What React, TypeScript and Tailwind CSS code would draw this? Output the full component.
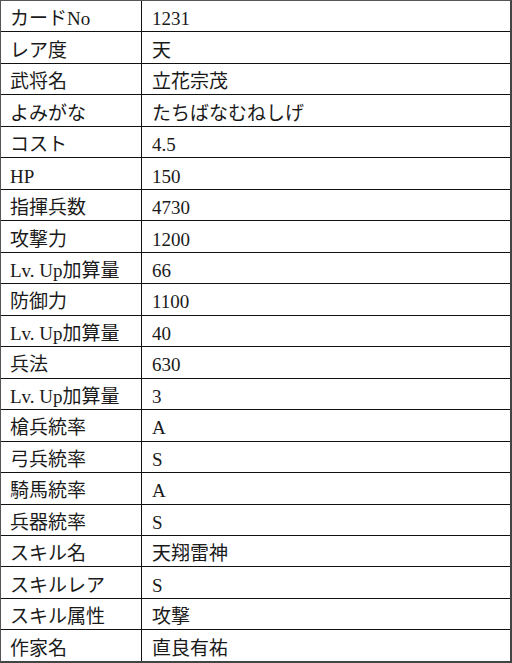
import React from "react";

const rows: [string, string][] = [
  ["カードNo", "1231"],
  ["レア度", "天"],
  ["武将名", "立花宗茂"],
  ["よみがな", "たちばなむねしげ"],
  ["コスト", "4.5"],
  ["HP", "150"],
  ["指揮兵数", "4730"],
  ["攻撃力", "1200"],
  ["Lv. Up加算量", "66"],
  ["防御力", "1100"],
  ["Lv. Up加算量", "40"],
  ["兵法", "630"],
  ["Lv. Up加算量", "3"],
  ["槍兵統率", "A"],
  ["弓兵統率", "S"],
  ["騎馬統率", "A"],
  ["兵器統率", "S"],
  ["スキル名", "天翔雷神"],
  ["スキルレア", "S"],
  ["スキル属性", "攻撃"],
  ["作家名", "直良有祐"],
];

export default function App() {
  return (
    <div
      className="w-[512px] h-[663px] bg-white flex flex-col border-t border-l border-[#555] border-r-2 border-b-2 border-r-[#444] border-b-[#444] text-[19px] text-[#1a1a1a]"
      style={{ fontFamily: '"Liberation Serif", "Noto Sans CJK JP", serif' }}
    >
      {rows.map(([k, v], i) => (
        <div
          key={i}
          className={`flex flex-1 ${i < rows.length - 1 ? "border-b border-[#111]" : ""}`}
        >
          <div className="w-[141px] shrink-0 border-r border-[#111] pl-[9px] pt-[5px] flex items-center leading-none">
            {k}
          </div>
          <div className="flex-1 pl-[10px] pt-[5px] flex items-center leading-none">
            {v}
          </div>
        </div>
      ))}
    </div>
  );
}
